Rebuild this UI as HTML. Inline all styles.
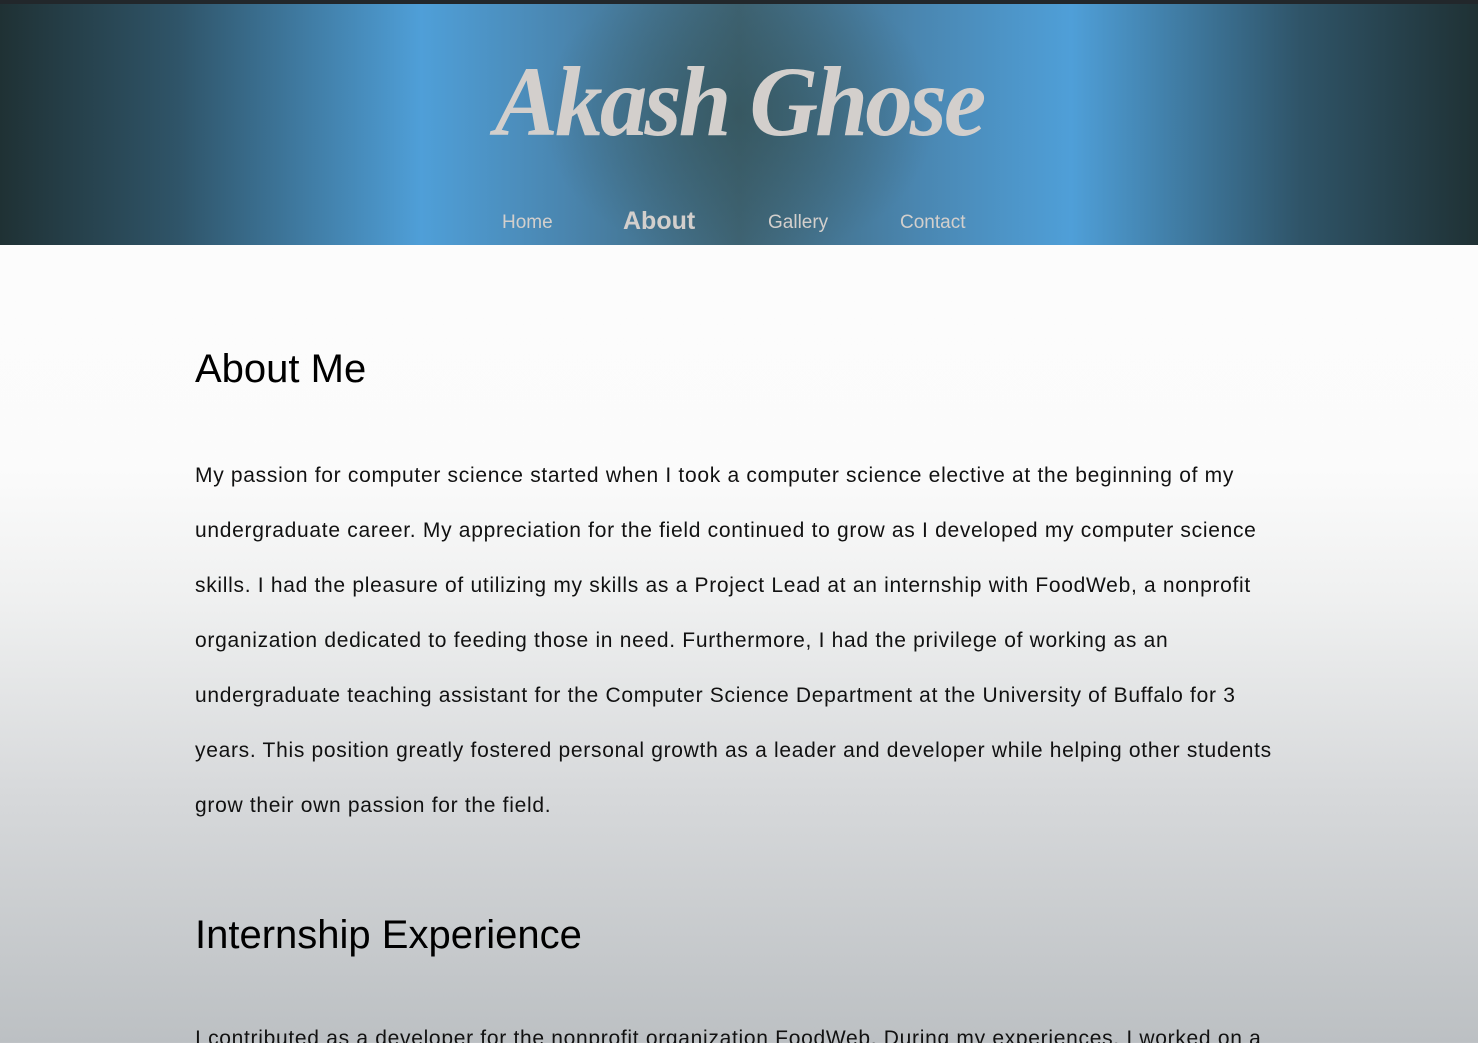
<!DOCTYPE html>
<html><head><meta charset="utf-8"><style>
html,body{margin:0;padding:0;overflow:hidden;height:1043px}
body{width:1478px;position:relative;background:linear-gradient(to bottom,#fdfdfd 0px,#fbfbfb 470px,#eff0f0 600px,#d6d8da 800px,#bcc0c3 1043px);font-family:"Liberation Sans",sans-serif;color:#111}
.top{height:4px;background:#22272b}
header{position:relative;height:241px;background:linear-gradient(to right,#1f3134 0%,#2f5468 12%,#4f9fd8 28.5%,#4a86b0 38%,#3f6474 50%,#4a86b0 62%,#4f9fd8 72.5%,#2f5468 88%,#1f3134 100%);overflow:hidden}
header:before{content:"";position:absolute;left:539px;top:-40px;width:400px;height:300px;background:radial-gradient(ellipse at center,rgba(50,80,85,.6),rgba(60,95,110,0) 70%)}
h1{position:absolute;left:0;right:0;top:40px;margin:0;text-align:center;font-family:"Liberation Serif",serif;font-style:italic;font-weight:bold;font-size:100px;color:#d3cfcc;letter-spacing:-3px;transform:scaleX(.95)}
nav{position:absolute;top:208px;left:0;right:0;font-size:19px;color:#d3cfcc}
nav span{position:absolute}
.c{position:absolute;left:195px;top:0;width:1200px}
h2{margin:0;font-weight:normal;font-size:40px;color:#000;position:absolute;white-space:nowrap}
p{margin:0;position:absolute;font-size:21px;line-height:55px;white-space:nowrap;color:#111;letter-spacing:.7px}
</style></head><body>
<div class="top"></div>
<header>
<h1>Akash Ghose</h1>
<nav><span style="left:502px">Home</span><span style="left:623px;font-size:25px;font-weight:bold;top:-5px">About</span><span style="left:768px">Gallery</span><span style="left:900px">Contact</span></nav>
</header>
<div class="c">
<h2 style="top:347px;left:0">About Me</h2>
<p style="top:448px;left:0">My passion for computer science started when I took a computer science elective at the beginning of my<br>undergraduate career. My appreciation for the field continued to grow as I developed my computer science<br>skills. I had the pleasure of utilizing my skills as a Project Lead at an internship with FoodWeb, a nonprofit<br>organization dedicated to feeding those in need. Furthermore, I had the privilege of working as an<br>undergraduate teaching assistant for the Computer Science Department at the University of Buffalo for 3<br>years. This position greatly fostered personal growth as a leader and developer while helping other students<br>grow their own passion for the field.</p>
<h2 style="top:913px;left:0">Internship Experience</h2>
<p style="top:1011px;left:0">I contributed as a developer for the nonprofit organization FoodWeb. During my experiences, I worked on a</p>
</div>
</body></html>
